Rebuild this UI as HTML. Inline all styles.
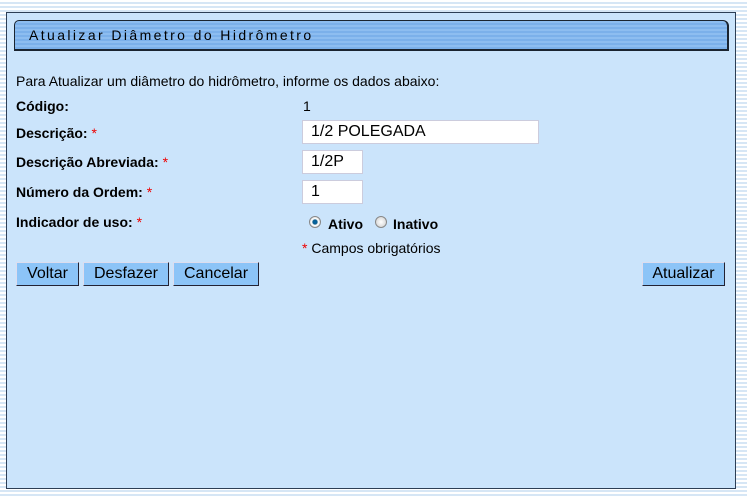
<!DOCTYPE html>
<html><head><meta charset="utf-8"><style>
body{margin:0;width:747px;height:497px;overflow:hidden;background:repeating-linear-gradient(to bottom,#fff 0,#fff 2px,#d6e6f5 2px,#d6e6f5 4px);font-family:"Liberation Sans",sans-serif;font-size:14px;color:#000;position:relative}
.panel{position:absolute;left:6px;top:12px;width:728px;height:475px;background:#cbe4fb;border:1px solid #2d3e55}
.title{position:absolute;left:14px;top:20px;width:712px;height:28px;border:1px solid #1a2430;border-width:1px 2px 2px 1px;border-radius:5px 6px 0 0;background:repeating-linear-gradient(to bottom,#8dbdf0 0,#8dbdf0 2px,#7bb0ea 2px,#7bb0ea 4px)}
.title span{position:absolute;left:14px;top:6px;letter-spacing:2.4px;font-size:14px;color:#000}
.t{position:absolute;white-space:nowrap}
b{font-weight:bold}
.r{color:#e00}
.in{position:absolute;background:#fff;border:1px solid #ccd;height:24px;box-sizing:border-box;font-size:16px;padding:2px 8px}
.btn{position:absolute;top:262px;height:24px;box-sizing:border-box;background:#8cc4f7;border:1px solid #224;border-color:#dde #223 #223 #dde;font-size:16px;text-align:center;line-height:21px}
.rad{position:absolute;width:10px;height:10px;border-radius:50%;border:1px solid #888;background:radial-gradient(#fff,#ccc)}
</style></head><body>
<div class="panel"></div>
<div class="title"><span>Atualizar Diâmetro do Hidrômetro</span></div>
<div class="t" style="left:16px;top:73px">Para Atualizar um diâmetro do hidrômetro, informe os dados abaixo:</div>
<div class="t" style="left:16px;top:98px"><b>Código:</b></div>
<div class="t" style="left:303px;top:98px">1</div>
<div class="t" style="left:16px;top:125px"><b>Descrição:</b> <span class="r">*</span></div>
<div class="in" style="left:302px;top:120px;width:237px">1/2 POLEGADA</div>
<div class="t" style="left:16px;top:154px"><b>Descrição Abreviada:</b> <span class="r">*</span></div>
<div class="in" style="left:302px;top:150px;width:61px">1/2P</div>
<div class="t" style="left:16px;top:184px"><b>Número da Ordem:</b> <span class="r">*</span></div>
<div class="in" style="left:302px;top:180px;width:61px">1</div>
<div class="t" style="left:16px;top:214px"><b>Indicador de uso:</b> <span class="r">*</span></div>
<div class="rad" style="left:309px;top:216px;background:radial-gradient(#06a 0,#0a5c8c 30%,#fff 45%,#ccc)"></div>
<div class="t" style="left:328px;top:216px;font-size:14px"><b>Ativo</b></div>
<div class="rad" style="left:375px;top:216px"></div>
<div class="t" style="left:393px;top:216px;font-size:14px"><b>Inativo</b></div>
<div class="t" style="left:302px;top:240px"><span class="r">*</span> Campos obrigatórios</div>
<div class="btn" style="left:16px;width:63px">Voltar</div>
<div class="btn" style="left:83px;width:86px">Desfazer</div>
<div class="btn" style="left:173px;width:86px">Cancelar</div>
<div class="btn" style="left:642px;width:83px">Atualizar</div>
</body></html>
